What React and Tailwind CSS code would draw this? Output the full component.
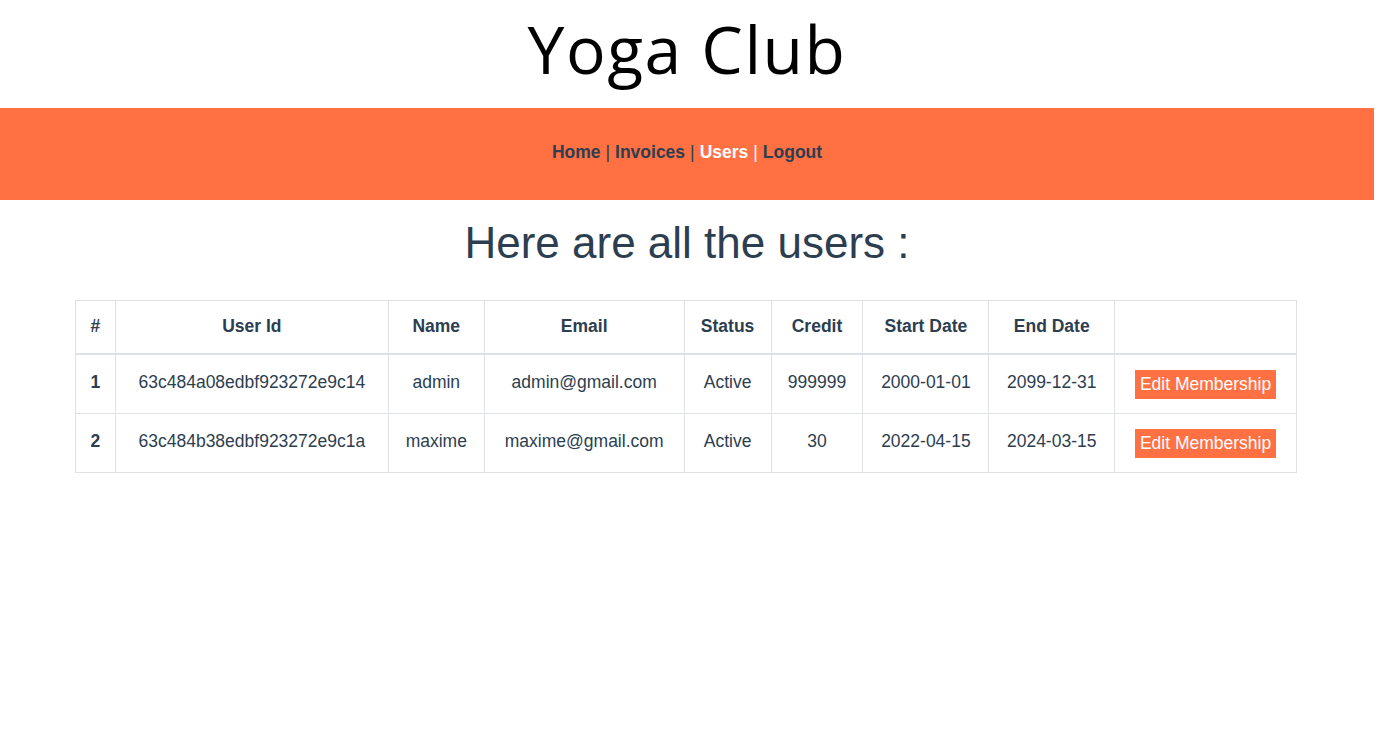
import React from "react";

const users = [
  { n: 1, id: "63c484a08edbf923272e9c14", name: "admin", email: "admin@gmail.com", status: "Active", credit: "999999", start: "2000-01-01", end: "2099-12-31" },
  { n: 2, id: "63c484b38edbf923272e9c1a", name: "maxime", email: "maxime@gmail.com", status: "Active", credit: "30", start: "2022-04-15", end: "2024-03-15" },
];

const widths = [40, 273, 96, 200, 87, 92, 126, 126, 182];

export default function App() {
  return (
    <div className="w-[1374px] min-h-[755px] bg-white text-[#2c3e50]" style={{ fontFamily: '"Liberation Sans", Arial, sans-serif' }}>
      <div className="h-[108px] flex items-start justify-center">
        <h1 className="text-[66px] leading-none font-normal text-black mt-[15px] tracking-[1.5px]" style={{ fontFamily: '"Open Sans", sans-serif' }}>
          Yoga Club
        </h1>
      </div>
      <nav className="h-[92px] bg-[#ff7043] flex items-center justify-center text-[17.5px] font-bold pb-[3px]">
        <span className="text-[#2c3e50]">Home</span>
        <span className="font-normal mx-[5px]">|</span>
        <span className="text-[#2c3e50]">Invoices</span>
        <span className="font-normal mx-[5px]">|</span>
        <span className="text-white">Users</span>
        <span className="font-normal mx-[5px] text-white">|</span>
        <span className="text-[#2c3e50]">Logout</span>
      </nav>
      <h2 className="text-center text-[44px] leading-[53px] font-normal mt-[16px] mb-[31px]">Here are all the users :</h2>
      <div className="w-[1222px] ml-[75px]">
        <table className="w-full border-collapse text-[17.5px] leading-[26px] text-center">
          <colgroup>
            {widths.map((w, i) => (
              <col key={i} style={{ width: w }} />
            ))}
          </colgroup>
          <thead>
            <tr>
              {["#", "User Id", "Name", "Email", "Status", "Credit", "Start Date", "End Date", ""].map((h, i) => (
                <th key={i} className="border border-[#dee2e6] border-b-2 pt-[12px] pb-[14px] px-0 font-bold align-top">
                  {h}
                </th>
              ))}
            </tr>
          </thead>
          <tbody>
            {users.map((u) => (
              <tr key={u.n}>
                <td className="border border-[#dee2e6] pt-[14px] pb-[12px] align-top font-bold">{u.n}</td>
                <td className="border border-[#dee2e6] pt-[14px] pb-[12px] align-top">{u.id}</td>
                <td className="border border-[#dee2e6] pt-[14px] pb-[12px] align-top">{u.name}</td>
                <td className="border border-[#dee2e6] pt-[14px] pb-[12px] align-top">{u.email}</td>
                <td className="border border-[#dee2e6] pt-[14px] pb-[12px] align-top">{u.status}</td>
                <td className="border border-[#dee2e6] pt-[14px] pb-[12px] align-top">{u.credit}</td>
                <td className="border border-[#dee2e6] pt-[14px] pb-[12px] align-top">{u.start}</td>
                <td className="border border-[#dee2e6] pt-[14px] pb-[12px] align-top">{u.end}</td>
                <td className="border border-[#dee2e6] pt-[14px] pb-[12px] align-top">
                  <div className="pt-[1px] pb-[2px] flex justify-center">
                    <button className="h-[29px] px-[5px] bg-[#ff7043] text-white leading-[29px] text-[17.5px]">Edit Membership</button>
                  </div>
                </td>
              </tr>
            ))}
          </tbody>
        </table>
      </div>
    </div>
  );
}
